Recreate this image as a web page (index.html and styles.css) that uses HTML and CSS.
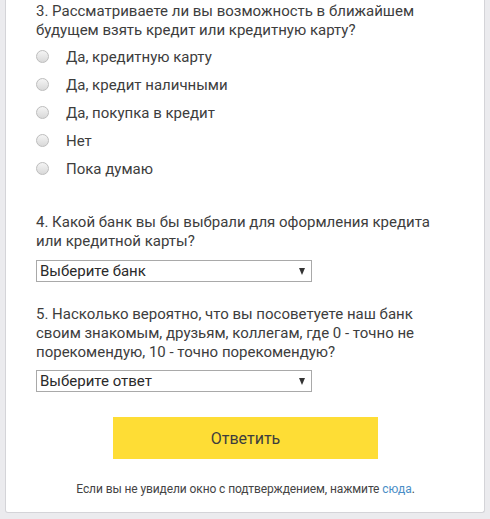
FILE: index.html
```html
<!DOCTYPE html>
<html lang="ru">
<head>
    <meta charset="UTF-8">
    <meta name="viewport" content="width=device-width, initial-scale=1.0">
    <title>Опрос</title>
    <link rel="stylesheet" href="styles.css">
</head>
<body>
    <div class="survey-card">
        <div class="question q3">
            <p class="question-title">3. Рассматриваете ли вы возможность в ближайшем будущем взять кредит или кредитную карту?</p>
            <ul class="options">
                <li class="option"><span class="radio"></span>Да, кредитную карту</li>
                <li class="option"><span class="radio"></span>Да, кредит наличными</li>
                <li class="option"><span class="radio"></span>Да, покупка в кредит</li>
                <li class="option"><span class="radio"></span>Нет</li>
                <li class="option"><span class="radio"></span>Пока думаю</li>
            </ul>
        </div>

        <div class="question q4">
            <p class="question-title">4. Какой банк вы бы выбрали для оформления кредита или кредитной карты?</p>
            <div class="select-box">
                <span>Выберите банк</span>
                <span class="arrow"></span>
            </div>
        </div>

        <div class="question q5">
            <p class="question-title">5. Насколько вероятно, что вы посоветуете наш банк своим знакомым, друзьям, коллегам, где 0 - точно не порекомендую, 10 - точно порекомендую?</p>
            <div class="select-box">
                <span>Выберите ответ</span>
                <span class="arrow"></span>
            </div>
        </div>

        <div class="actions">
            <button class="submit-btn">Ответить</button>
        </div>

        <p class="footer-note">Если вы не увидели окно с подтверждением, нажмите <a href="#">сюда</a>.</p>
    </div>
</body>
</html>
```

FILE: styles.css
```css
body {
    margin: 0;
    background-color: #ebebee;
    font-family: Roboto, "Liberation Sans", Arial, sans-serif;
    color: #3d3d3d;
}
.survey-card {
    margin: 0 5px;
    height: 513px;
    box-sizing: border-box;
    padding: 2px 29px 0 30px;
    background-color: #ffffff;
    border: 1px solid #d4d4d8;
    border-top: none;
    border-radius: 0 0 3px 3px;
}
.question-title {
    margin: 0;
    font-size: 15px;
    line-height: 19px;
}
.options {
    list-style: none;
    margin: 3px 0 0;
    padding: 0;
}
.option {
    display: flex;
    align-items: center;
    height: 28px;
    font-size: 15px;
}
.radio {
    width: 11px;
    height: 11px;
    margin: -2px 17px 0 0;
    border: 1px solid #bdbdbd;
    border-radius: 50%;
    background: linear-gradient(#f4f4f4, #d9d9d9);
}
.q4 {
    margin-top: 30px;
}
.q5 {
    margin-top: 23px;
}
.select-box {
    display: flex;
    align-items: center;
    justify-content: space-between;
    box-sizing: border-box;
    width: 276px;
    height: 22px;
    margin-top: 9px;
    padding: 0 6px 0 3px;
    border: 1px solid #a9a9a9;
    font-size: 15px;
    color: #2a2a2a;
}
.q5 .select-box {
    margin-top: 8px;
}
.arrow {
    width: 0;
    height: 0;
    border-left: 3.5px solid transparent;
    border-right: 3.5px solid transparent;
    border-top: 7px solid #333333;
    margin-top: 1px;
}
.actions {
    display: flex;
    justify-content: center;
    margin-top: 25px;
}
.submit-btn {
    width: 265px;
    height: 42px;
    border: none;
    background-color: #fedd35;
    font-family: Roboto, "Liberation Sans", Arial, sans-serif;
    font-size: 16px;
    color: #3d3d3d;
}
.footer-note {
    margin: 22px 0 0;
    font-size: 12px;
    line-height: 16px;
    letter-spacing: -0.1px;
    text-align: center;
    color: #444444;
}
.footer-note a {
    color: #4a8ec6;
    text-decoration: none;
}
```
